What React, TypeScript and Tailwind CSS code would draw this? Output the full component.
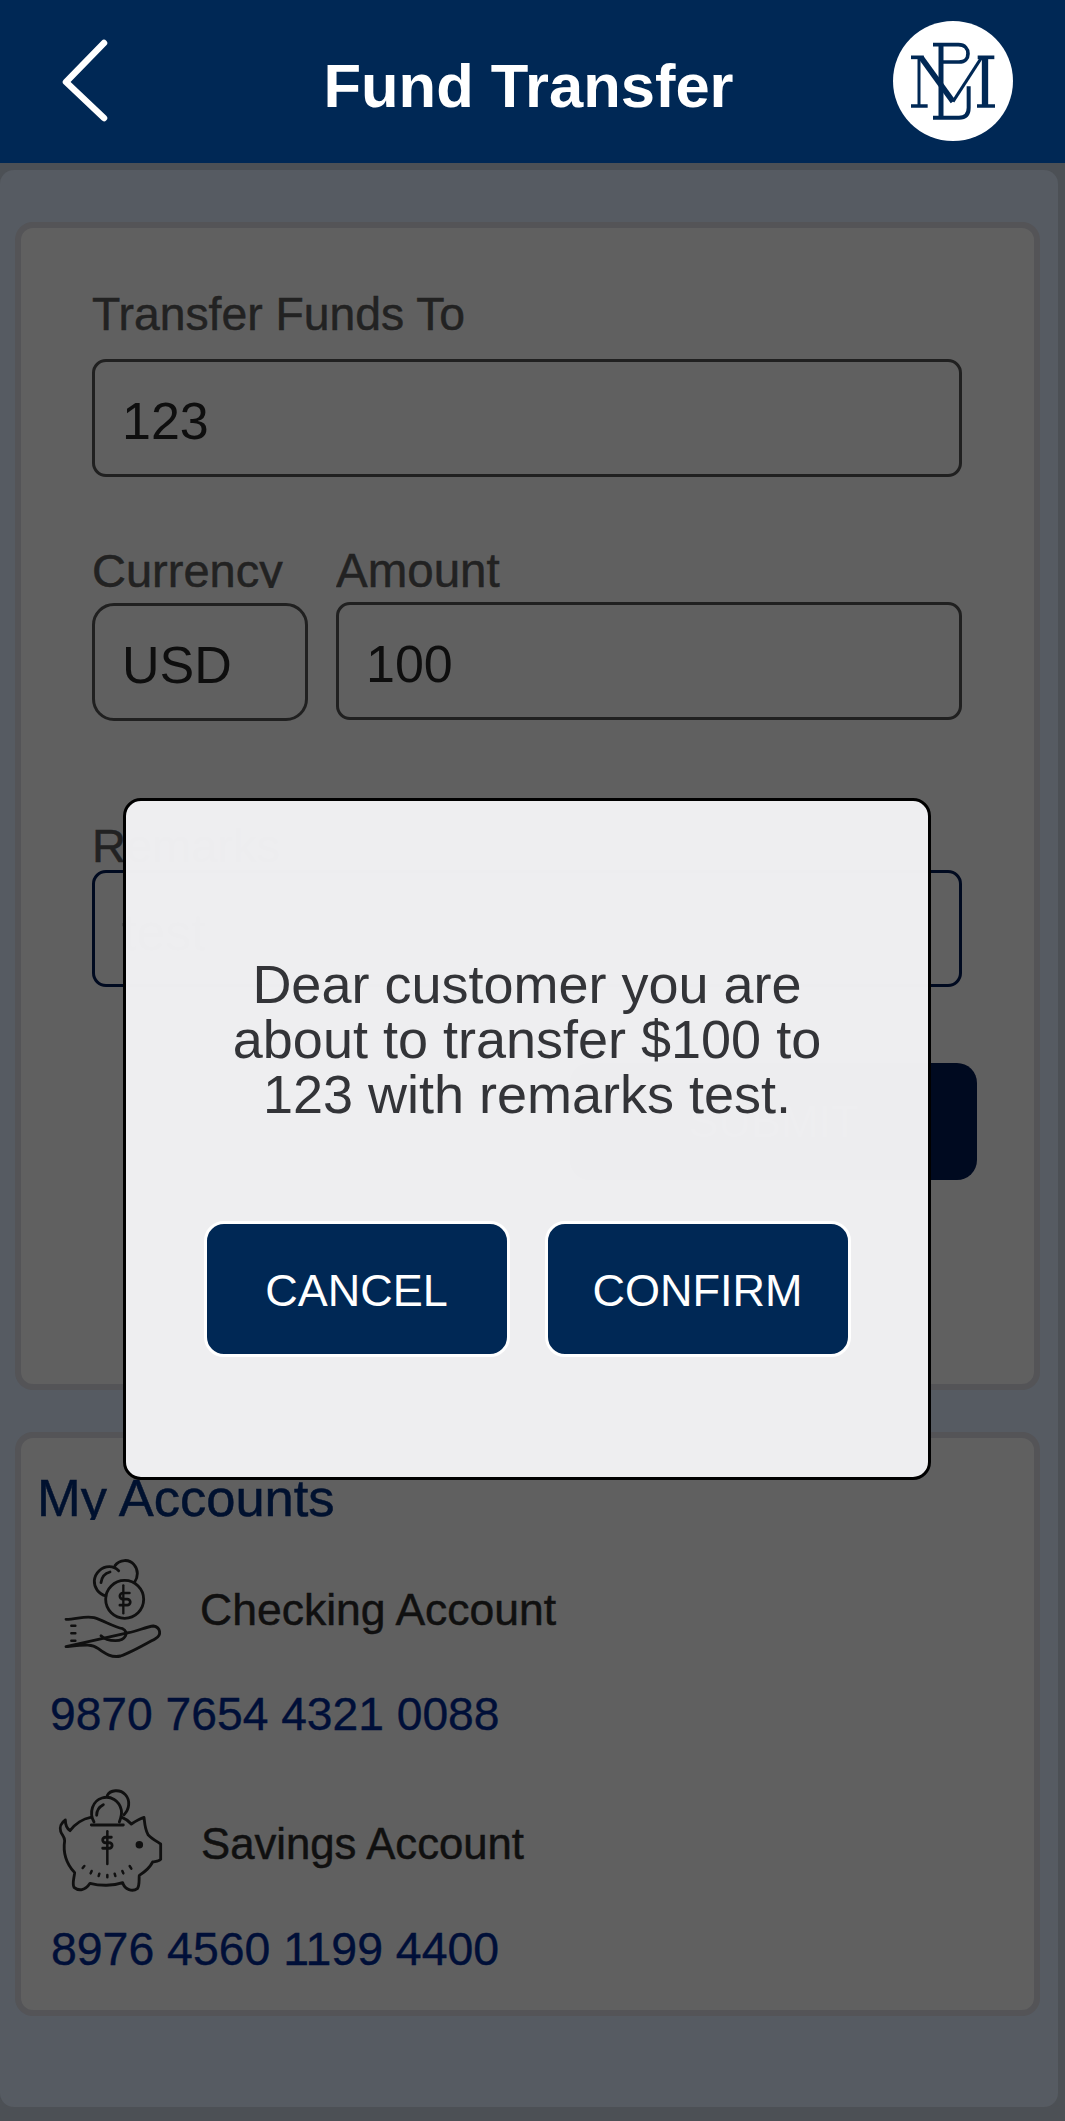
const font = "[font-family:'Liberation_Sans',Arial,sans-serif]";
// labels in the shot are a bit heavier than Liberation regular
const medium = "[-webkit-text-stroke:0.5px_currentColor]";

const BackChevron = () => (
  <svg width="60" height="90" viewBox="0 0 60 90" fill="none" className="block">
    <path d="M50 6 L12 45 L50 81" stroke="white" strokeWidth="6.5" strokeLinecap="round" strokeLinejoin="round" />
  </svg>
);

const Logo = () => (
  <svg width="120" height="120" viewBox="100 60 360 360" className="block">
    <circle cx="280" cy="240" r="180" fill="white" />
    <g fill="none" stroke="#002855" strokeLinejoin="round">
      {/* B */}
      <path d="M220 131 H296 C316 131 325 144 325 158 C325 172 316 183 298 183 H242" strokeWidth="11" />
      <path d="M244 131 V350" strokeWidth="15" />
      <path d="M220 350 H298 C318 350 327 338 327 320 V256" strokeWidth="12" />
      {/* M */}
      <path d="M154 169 H192" strokeWidth="11" />
      <path d="M354 169 H404" strokeWidth="11" />
      <path d="M184 169 L280 302" strokeWidth="17" />
      <path d="M280 302 L366 169" strokeWidth="9" />
      <path d="M178 169 V315" strokeWidth="9" />
      <path d="M376 169 V315" strokeWidth="19" />
      <path d="M154 315 H204 M352 315 H406" strokeWidth="10" />
    </g>
  </svg>
);

const HandCoinsIcon = () => (
  <svg width="160" height="160" viewBox="0 0 480 480" fill="none" stroke="#101010" strokeWidth="8.5" strokeLinecap="round" strokeLinejoin="round" className="block shrink-0">
    <path d="M255 137 C268 118 298 116 312 134 C326 150 324 172 314 186" />
    <path d="M228 228 C205 222 192 202 193 182 C195 158 215 140 238 140 C250 140 258 144 266 152" />
    <path d="M213 188 C215 172 224 160 240 156" />
    <circle cx="284" cy="238" r="57" />
    <path transform="translate(254 206) scale(2.6)" strokeWidth="3.1" d="M17 5H9.5a3.5 3.5 0 0 0 0 7h5a3.5 3.5 0 0 1 0 7H6" />
    <path d="M280 196 V280" strokeWidth="7" />
    <path d="M108 298 C140 298 165 286 192 293 C222 302 250 320 278 326 C298 336 288 362 256 362 C236 362 222 356 213 347" />
    <path d="M296 338 C320 334 350 320 370 318 C392 322 396 345 376 356 C340 376 302 398 272 408 C246 414 226 402 205 386 C186 372 170 374 108 380 Z" />
    <path d="M124 317 H136 M124 340 H136 M124 362 H136" strokeWidth="7.5" />
  </svg>
);

const PiggyIcon = () => (
  <svg width="160" height="150" viewBox="0 0 480 450" fill="none" stroke="#101010" strokeWidth="8.5" strokeLinecap="round" strokeLinejoin="round" className="block shrink-0">
    <path d="M232 76 C240 60 270 56 286 74 C302 92 298 118 282 134" />
    <path d="M192 156 C176 128 188 92 216 84 C242 76 268 92 274 120 C276 132 272 146 268 156" />
    <path d="M200 136 C200 122 208 110 220 104" />
    <path d="M184 165 H280" />
    <path d="M182 142 C160 146 135 162 120 182 C106 172 106 160 106 150 C94 158 88 172 92 184 C96 196 104 200 104 212 C98 250 112 284 134 308 C132 326 126 342 132 352 C146 364 166 362 180 340 C210 348 250 348 278 338 C284 360 308 366 322 356 C330 344 326 328 328 316 C344 306 360 292 368 276 C378 274 388 274 392 268 V222 C380 214 366 206 354 194 C344 176 344 156 342 142 C328 146 316 154 304 162 C296 152 286 146 276 142" />
    <circle cx="328" cy="224" r="7" fill="#101010" />
    <path transform="translate(204 190) scale(2.35)" strokeWidth="3.6" d="M17 5H9.5a3.5 3.5 0 0 0 0 7h5a3.5 3.5 0 0 1 0 7H6" />
    <path d="M232 184 V282" strokeWidth="7.5" />
    <path d="M158 294 L163 288 M182 310 L185 303 M206 318 L208 311 M232 322 V315 M256 318 L254 311 M280 310 L277 303 M304 296 L299 288" strokeWidth="7.5" />
  </svg>
);

const ValueBox = ({ value, className }: { value: string; className: string }) => (
  <div className={`flex items-center rounded-[14px] border-[3px] pl-[27px] text-[52px] text-[#0e0e0e] ${className}`}>
    <span className="relative top-[3px]">{value}</span>
  </div>
);

export default function App() {
  return (
    <div className={`relative flex h-[2121px] w-[1065px] flex-col overflow-hidden bg-[#4c5055] ${font}`}>
      <header className="grid h-[163px] grid-cols-[1fr_auto_1fr] items-center bg-[#002855]">
        <div className="pl-[54px]">
          <BackChevron />
        </div>
        <h1 className="pr-[8px] pt-[8px] text-[61.5px] font-bold leading-[70px] text-white">Fund Transfer</h1>
        <div className="flex justify-end pb-[2px] pr-[52px]">
          <Logo />
        </div>
      </header>

      <main className="mt-[7px] h-[1937px] w-[1058px] rounded-[14px] bg-[#565b62] pl-[15px] pt-[52px]">
        <section className="h-[1168px] w-[1025px] rounded-[18px] border-[6px] border-[#545457] bg-[#606060] pl-[71px] pt-[60px]">
          <label className={`mb-[19px] block h-[52px] text-[46.3px] leading-[52px] text-[#222222] ${medium}`}>Transfer Funds To</label>
          <ValueBox value="123" className="h-[118px] w-[870px] border-[#202020]" />

          <div className="mt-[68px] flex gap-[28px]">
            <div className="w-[216px]">
              <div className={`h-[43px] overflow-hidden text-[47px] leading-[52px] text-[#222222] ${medium}`}>Currency</div>
              <ValueBox value="USD" className="mt-[15px] h-[118px] rounded-[22px] border-[#202020]" />
            </div>
            <div className="w-[626px]">
              <div className={`h-[43px] overflow-hidden text-[47.5px] leading-[52px] text-[#222222] ${medium}`}>Amount</div>
              <ValueBox value="100" className="mt-[14px] h-[118px] border-[#202020]" />
            </div>
          </div>

          <div className={`mt-[99px] h-[50px] overflow-hidden text-[47px] leading-[52px] text-[#222222] ${medium}`}>Remarks</div>
          <ValueBox value="test" className="h-[117px] w-[870px] border-[#000a20]" />

          <button className="ml-[478px] mt-[76px] block h-[117px] w-[407px] rounded-[20px] bg-[#000a20] text-[45px] text-[#555555]">
            SUBMIT
          </button>
        </section>

        <section className="mt-[42px] h-[584px] w-[1025px] rounded-[18px] border-[6px] border-[#545457] bg-[#606060] pt-[30px]">
          <h2 className={`ml-[16px] h-[52px] overflow-hidden text-[52.5px] leading-[60px] text-[#00112f] ${medium}`}>My Accounts</h2>

          <div className="ml-[9px] flex">
            <HandCoinsIcon />
            <span className={`ml-[10px] mt-[64px] h-[52px] text-[44.5px] leading-[52px] text-[#101010] ${medium}`}>Checking Account</span>
          </div>
          <p className="ml-[29px] mt-[7px] text-[46.2px] leading-[54px] text-[#000f38] [-webkit-text-stroke:0.4px_currentColor]">9870 7654 4321 0088</p>

          <div className="ml-[9px] mt-[29px] flex">
            <PiggyIcon />
            <span className={`ml-[11px] mt-[48px] h-[52px] text-[43.7px] leading-[52px] text-[#101010] ${medium}`}>Savings Account</span>
          </div>
          <p className="ml-[30px] mt-[2px] text-[46.4px] leading-[54px] text-[#000f38] [-webkit-text-stroke:0.4px_currentColor]">8976 4560 1199 4400</p>
        </section>
      </main>

      {/* confirm dialog, sits over the dimmed form */}
      <div className="absolute left-[123px] top-[798px] flex h-[682px] w-[808px] flex-col items-center rounded-[18px] border-[3px] border-black bg-[#f0f0f2]/[0.99] pt-[156px]">
        <p className="text-center text-[54px] leading-[55px] text-[#333438]">
          Dear customer you are
          <br />
          about to transfer $100 to
          <br />
          123 with remarks test.
        </p>
        <div className="mt-[99px] flex gap-[35px]">
          <button className="h-[136px] w-[306px] rounded-[20px] border-[3px] border-white bg-[#002855] pt-[4px] text-[45px] text-white">CANCEL</button>
          <button className="h-[136px] w-[306px] rounded-[20px] border-[3px] border-white bg-[#002855] pt-[4px] text-[45px] text-white">CONFIRM</button>
        </div>
      </div>
    </div>
  );
}
